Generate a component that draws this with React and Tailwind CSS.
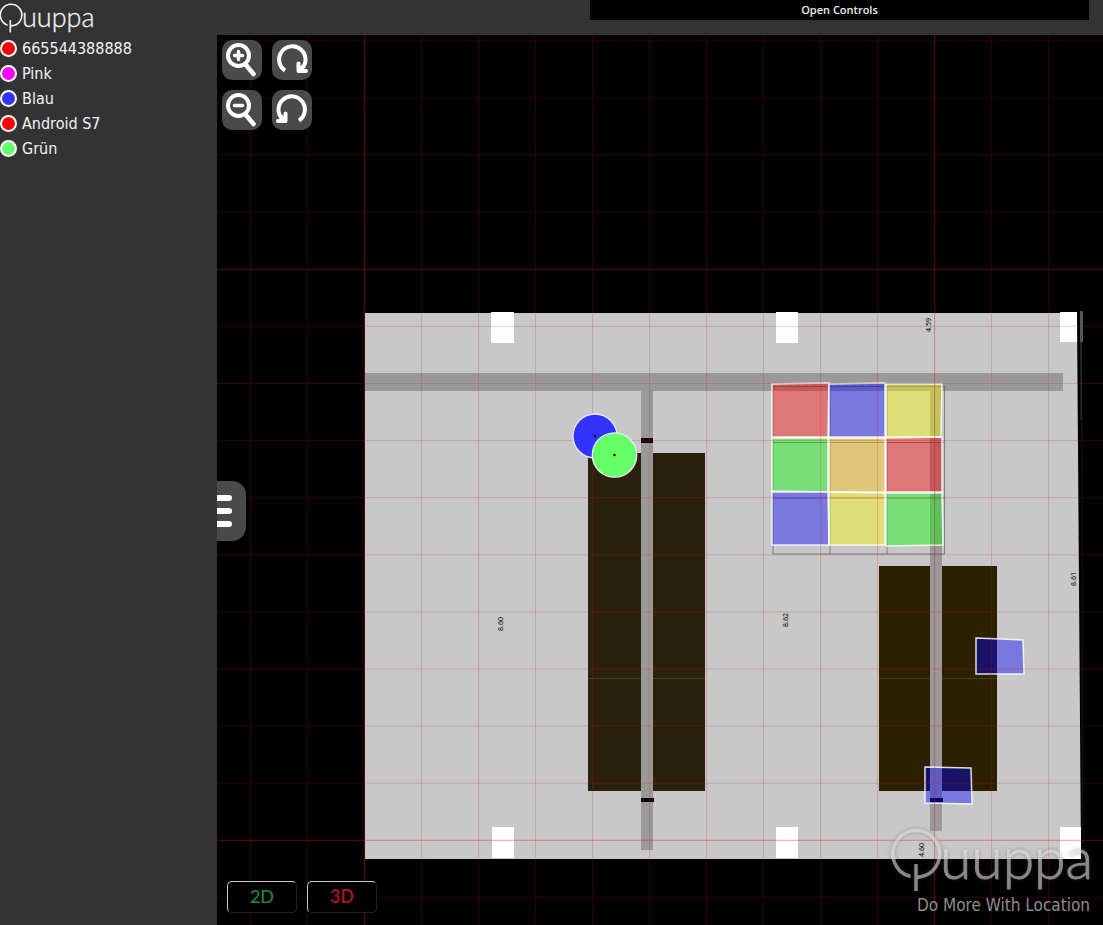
import React from "react";

const tags = [
  { name: "665544388888", dot: "bg-[#ff0000]" },
  { name: "Pink", dot: "bg-[#ff00ff]" },
  { name: "Blau", dot: "bg-[#3333ff]" },
  { name: "Android S7", dot: "bg-[#ff0000]" },
  { name: "Grün", dot: "bg-[#66ff66]" },
];

const zones = [
  { points: "772,384 829,383 828,437 772,437", fill: "#ff0000" },
  { points: "829,384 885,383 885,437 829,437", fill: "#0000ff" },
  { points: "886,384 942,384 941,437 886,437", fill: "#ffff00" },
  { points: "772,438 828,438 828,492 772,491", fill: "#00ff00" },
  { points: "829,438 885,438 885,492 829,492", fill: "#ffc800" },
  { points: "886,438 942,437 942,492 886,492", fill: "#ff0000" },
  { points: "772,492 828,492 829,545 772,545", fill: "#0000ff" },
  { points: "829,492 885,493 885,545 829,545", fill: "#ffff00" },
  { points: "886,493 942,493 943,545 886,546", fill: "#00ff00" },
  { points: "976,638 1023,640 1024,674 976,674", fill: "#0000ff" },
  { points: "925,767 971,768 972,804 925,803", fill: "#0000ff" },
];

const distances = [
  { x: 928, y: 325, text: "4.59" },
  { x: 500, y: 624, text: "8.60" },
  { x: 785, y: 620, text: "8.62" },
  { x: 1073, y: 579, text: "8.61" },
  { x: 921, y: 850, text: "4.60" },
];

const steps = Array.from({ length: 50 }, (_, i) => i - 4);

function Grid() {
  return (
    <g stroke="#e01420" strokeWidth="1">
      {steps.map((i) => (
        <line key={"v" + i} x1={364.6 + i * 57} x2={364.6 + i * 57} y1="0" y2="3000" strokeOpacity={i % 10 === 0 ? 0.42 : 0.22} />
      ))}
      {steps.map((i) => (
        <line key={"h" + i} y1={269.3 + i * 57.1} y2={269.3 + i * 57.1} x1="0" x2="4000" strokeOpacity={i % 10 === 0 ? 0.42 : 0.22} />
      ))}
    </g>
  );
}

function FloorPlan() {
  return (
    <svg className="absolute inset-0 size-full" role="img" aria-label="Floor plan">
      <g transform="translate(-217 -35)">
        <polygon points="365,313 1077,313 1081,859 365,859" fill="#c8c8c8" />
        <g fill="#fff">
          <rect x="491" y="312" width="23" height="31" />
          <rect x="776" y="312" width="22" height="31" />
          <rect x="1060" y="312" width="17" height="30" />
          <rect x="492" y="827" width="22" height="31" />
          <rect x="776" y="827" width="22" height="31" />
          <rect x="1060" y="827" width="21" height="32" />
        </g>
        <rect x="1080" y="311" width="3" height="31" fill="#555" />
        <line x1="1081.5" y1="342" x2="1083" y2="859" stroke="#161616" />
        <line x1="1081" y1="342" x2="1081" y2="420" stroke="#3a3a3a" />
        <g fill="#999">
          <rect x="365" y="373" width="698" height="18" />
          <rect x="641" y="391" width="12" height="459" />
          <rect x="930" y="391" width="12" height="440" />
        </g>
        <g fill="#2a210d">
          <rect x="588" y="453" width="53" height="338" />
          <rect x="653" y="453" width="52" height="338" />
        </g>
        <g fill="#2b2102">
          <rect x="879" y="566" width="51" height="225" />
          <rect x="942" y="566" width="55" height="225" />
        </g>
        <path d="M588 678.5H641M653 678.5H705M879 678.5H930M942 678.5H997" stroke="#443d24" />
        <g fill="#120006">
          <rect x="641" y="438" width="12" height="5" />
          <rect x="641" y="798" width="13" height="4" />
          <rect x="930" y="798" width="13" height="4" />
        </g>
        <path d="M773 386.5H944.5V554H773ZM830 386V554M887 386V554M773 442.5H944M773 498H944" fill="none" stroke="#555" strokeOpacity="0.65" />
        {zones.map((z) => (
          <polygon key={z.points} points={z.points} fill={z.fill} fillOpacity="0.4" stroke="#fff" strokeOpacity="0.85" strokeWidth="1.5" />
        ))}
        <Grid />
        {distances.map((d) => (
          <text
            key={d.text + d.x}
            x={d.x}
            y={d.y}
            transform={`rotate(-90 ${d.x} ${d.y})`}
            textAnchor="middle"
            dominantBaseline="central"
            className="fill-black font-['Noto_Sans',sans-serif] text-[7px]"
          >
            {d.text}
          </text>
        ))}
        <g stroke="#e8e8ff" strokeWidth="1.3">
          <circle cx="595" cy="436" r="22" fill="#3333ff" />
          <circle cx="614.5" cy="455" r="22.2" fill="#66ff66" />
        </g>
        <circle cx="595" cy="436" r="1.2" />
        <circle cx="614.5" cy="455" r="1.2" />
      </g>
    </svg>
  );
}

function SideLogo() {
  return (
    <svg width="96" height="36" viewBox="0 0 96 36" role="img" aria-label="Quuppa" className="block">
      <path d="M7.5 25.2A10.8 10.8 0 1 1 14 25.4L10.3 26M10.3 20V32.5" fill="none" stroke="#f4f4f4" strokeWidth="1.6" />
      <text x="22" y="27" stroke="#f4f4f4" strokeWidth="0.3" className="fill-[#f4f4f4] font-[Lato,sans-serif] text-[27px] font-light">uuppa</text>
    </svg>
  );
}

function Watermark() {
  return (
    <div className="pointer-events-none absolute right-[13px] bottom-2 flex flex-col items-end text-[#8e8e8e]">
      <svg width="202" height="68" viewBox="0 0 202 68" role="img" aria-label="Quuppa" className="block overflow-visible drop-shadow-[0_0_2px_rgba(70,70,70,0.7)]">
        <g opacity="0.55" fill="none" stroke="#eee" strokeWidth="3.5">
          <path d="M22.5 51.5A23.4 23.4 0 1 1 34 51.5L28 52.5" />
          <path d="M28 39V66" />
          <text x="52" y="54" fill="#eee" strokeWidth="0.9" className="font-[Lato,sans-serif] text-[57px] font-light">uuppa</text>
        </g>
      </svg>
      <p className="font-['DejaVu_Sans_Condensed','DejaVu_Sans',sans-serif] text-[17px] leading-6 whitespace-nowrap">Do More With Location</p>
    </div>
  );
}

function MapButton({ label, children }) {
  return (
    <button type="button" aria-label={label} className="size-10 rounded-[10px] bg-[#4a4a4a]">
      <svg viewBox="0 0 40 40" className="size-full" fill="none" stroke="#fff" strokeWidth="4" strokeLinecap="round" strokeLinejoin="round">
        {children}
      </svg>
    </button>
  );
}

export default function App() {
  return (
    <div className="grid min-h-screen grid-cols-[217px_1fr] bg-[#333]">
      <aside>
        <SideLogo />
        <ul className="font-['DejaVu_Sans_Condensed','DejaVu_Sans',sans-serif] text-[16px] text-[#f4f4f4]">
          {tags.map((t) => (
            <li key={t.name} className="flex h-[25px] items-center gap-[5px]">
              <span className={`size-[17px] rounded-full border-2 border-white ${t.dot}`} />
              {t.name}
            </li>
          ))}
        </ul>
      </aside>
      <div className="flex min-w-0 flex-col">
        <header className="flex h-[35px] items-start justify-end pr-[14px]">
          <button type="button" className="h-5 w-[499px] bg-black font-['Open_Sans',sans-serif] text-[11px] leading-5 font-semibold text-[#eee]">
            Open Controls
          </button>
        </header>
        <main className="relative flex-1 overflow-hidden bg-black">
          <FloorPlan />
          <div className="absolute top-[5px] left-[5px] grid grid-cols-2 gap-[10px]">
            <MapButton label="Zoom in">
              <circle cx="16.5" cy="15.5" r="10.5" />
              <path d="M16.5 11.5V19.5M12.5 15.5H20.5" strokeWidth="3.5" />
              <path d="M24 25L31.5 34" strokeWidth="4.5" />
            </MapButton>
            <MapButton label="Rotate clockwise">
              <path d="M13 30.5A13.2 13.2 0 1 1 29.5 29" strokeLinecap="butt" />
              <path d="M26.5 23.5V31H34" />
              <path d="M27 30.5L31 26.5" />
            </MapButton>
            <MapButton label="Zoom out">
              <circle cx="16.5" cy="15.5" r="10.5" />
              <path d="M12.5 15.5H20.5" strokeWidth="3.5" />
              <path d="M24 25L31.5 34" strokeWidth="4.5" />
            </MapButton>
            <MapButton label="Rotate counterclockwise">
              <path d="M27 30.5A13.2 13.2 0 1 0 10.5 29" strokeLinecap="butt" />
              <path d="M13.5 23.5V31H6" />
              <path d="M13 30.5L9 26.5" />
            </MapButton>
          </div>
          <button type="button" aria-label="Menu" className="absolute top-[446px] left-0 flex h-[60px] w-[29px] flex-col justify-center gap-[7px] rounded-r-[14px] bg-[#4a4a4a]">
            <span className="h-1.5 w-[15px] rounded-r-full bg-white" />
            <span className="h-1.5 w-[15px] rounded-r-full bg-white" />
            <span className="h-1.5 w-[15px] rounded-r-full bg-white" />
          </button>
          <div className="absolute bottom-3 left-[10px] flex gap-[10px] font-[Lato,sans-serif] text-[18px]">
            <button type="button" className="h-8 w-[70px] rounded-[5px] border border-t-[#ccc] border-r-[#222] border-b-[#222] border-l-[#ccc] bg-black pb-0.5 leading-7 text-[#1f8f42]">
              2D
            </button>
            <button type="button" className="h-8 w-[70px] rounded-[5px] border border-t-[#ccc] border-r-[#222] border-b-[#222] border-l-[#ccc] bg-black pb-0.5 leading-7 font-bold text-[#9c1620]">
              3D
            </button>
          </div>
          <Watermark />
        </main>
      </div>
    </div>
  );
}
